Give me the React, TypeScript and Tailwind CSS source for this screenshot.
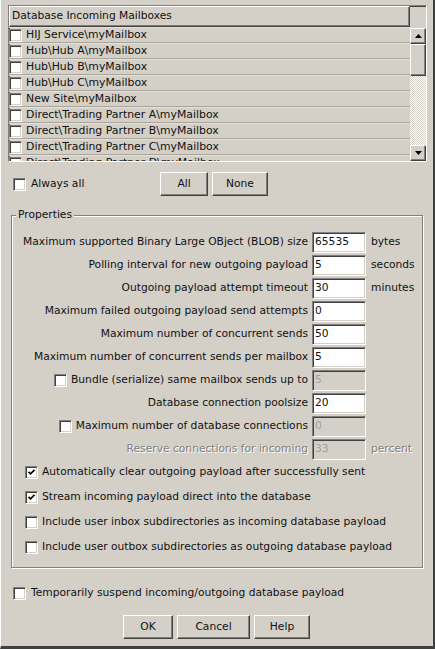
import React from "react";

const sunken =
  "border border-t-[#808080] border-l-[#808080] border-b-white border-r-white shadow-[inset_1px_1px_0_#404040,inset_-1px_-1px_0_#d4d0c8]";
const raised =
  "border border-t-white border-l-white border-b-[#404040] border-r-[#404040] shadow-[inset_-1px_-1px_0_#808080]";

function Check({ checked = false }: { checked?: boolean }) {
  return (
    <span
      className={`relative inline-block w-[13px] h-[13px] shrink-0 bg-white ${sunken}`}
    >
      {checked && (
        <svg
          className="absolute left-[1px] top-[1px]"
          width="9"
          height="9"
          viewBox="0 0 9 9"
        >
          <path
            d="M1.5 3.8 L3.5 5.8 L7.5 1.8"
            stroke="#000"
            strokeWidth="1.7"
            fill="none"
          />
        </svg>
      )}
    </span>
  );
}

function Btn({ w, children }: { w: string; children: React.ReactNode }) {
  return (
    <div
      className={`${w} h-[24px] bg-[#d4d0c8] flex items-center justify-center ${raised}`}
    >
      {children}
    </div>
  );
}

function Field({
  label,
  value,
  unit,
  check,
  disabled,
}: {
  label: string;
  value: string;
  unit?: string;
  check?: boolean;
  disabled?: boolean;
}) {
  return (
    <div className="flex items-center h-[23px]">
      <div
        className={`w-[300px] pr-[4px] flex justify-end items-center gap-[4px] whitespace-nowrap ${
          disabled ? "text-[#808080] [text-shadow:1px_1px_0_#fff]" : ""
        }`}
      >
        {check && <Check />}
        <span>{label}</span>
      </div>
      <div
        className={`w-[54px] h-[21px] flex items-center px-[2px] ${sunken} ${
          value && (check || disabled)
            ? "bg-[#d4d0c8] text-[#a0a0a0]"
            : "bg-white"
        }`}
      >
        {value}
      </div>
      {unit && (
        <span
          className={`ml-[5px] whitespace-nowrap ${
            disabled ? "text-[#808080] [text-shadow:1px_1px_0_#fff]" : ""
          }`}
        >
          {unit}
        </span>
      )}
    </div>
  );
}

const rows = [
  "HIJ Service\\myMailbox",
  "Hub\\Hub A\\myMailbox",
  "Hub\\Hub B\\myMailbox",
  "Hub\\Hub C\\myMailbox",
  "New Site\\myMailbox",
  "Direct\\Trading Partner A\\myMailbox",
  "Direct\\Trading Partner B\\myMailbox",
  "Direct\\Trading Partner C\\myMailbox",
  "Direct\\Trading Partner D\\myMailbox",
];

function Arrow({ up }: { up?: boolean }) {
  return (
    <div
      className={`w-[16px] h-[16px] bg-[#d4d0c8] flex items-center justify-center ${raised}`}
    >
      <svg width="7" height="4" viewBox="0 0 7 4">
        {up ? (
          <path d="M3.5 0 L7 4 L0 4 Z" fill="#000" />
        ) : (
          <path d="M0 0 L7 0 L3.5 4 Z" fill="#000" />
        )}
      </svg>
    </div>
  );
}

export default function App() {
  return (
    <div className="w-[435px] h-[649px] bg-[#d4d0c8] text-[#111] text-[10.7px] leading-none font-['DejaVu_Sans',sans-serif] border-l border-l-white border-r-2 border-r-[#404040] border-b-[3px] border-b-[#404040] flex flex-col pl-[7px] pt-[5px] overflow-hidden">
      {/* list */}
      <div className={`w-[419px] h-[157px] flex flex-col bg-[#d4d0c8] ${sunken}`}>
        <div className="flex h-[21px] shrink-0">
          <div className={`flex-1 flex items-center pl-[2px] ${raised}`}>
            Database Incoming Mailboxes
          </div>
          <div className="w-[16px]" />
        </div>
        <div className="flex flex-1 overflow-hidden">
          <div className="flex-1 flex flex-col overflow-hidden text-[10.9px]">
            {rows.map((r) => (
              <div
                key={r}
                className="h-[16px] shrink-0 flex items-center gap-[4px] border-b border-b-[#a7a49c] border-t border-t-[#e4e1da] whitespace-nowrap"
              >
                <Check />
                <span>{r}</span>
              </div>
            ))}
          </div>
          <div className="w-[16px] flex flex-col mt-[1px]">
            <Arrow up />
            <div className={`w-[16px] h-[32px] bg-[#d4d0c8] ${raised}`} />
            <div className="flex-1 bg-[repeating-conic-gradient(#ffffff_0_25%,#d4d0c8_0_50%)] bg-[length:2px_2px]" />
            <Arrow />
          </div>
        </div>
      </div>

      {/* always all */}
      <div className="flex items-center h-[24px] mt-[10px]">
        <div className="w-[152px] flex items-center pl-[5px] gap-[5px]">
          <Check />
          <span>Always all</span>
        </div>
        <Btn w="w-[48px]">All</Btn>
        <div className="w-[4px]" />
        <Btn w="w-[56px]">None</Btn>
      </div>

      {/* group */}
      <div className="relative ml-[3px] mt-[19px] w-[412px] h-[353px] border border-[#808080] shadow-[1px_1px_0_#fff,inset_1px_1px_0_#fff]">
        <span className="absolute -top-[6px] left-[4px] px-[2px] bg-[#d4d0c8]">
          Properties
        </span>
        <div className="flex flex-col pt-[15px]">
          <Field
            label="Maximum supported Binary Large OBject (BLOB) size"
            value="65535"
            unit="bytes"
          />
          <Field
            label="Polling interval for new outgoing payload"
            value="5"
            unit="seconds"
          />
          <Field
            label="Outgoing payload attempt timeout"
            value="30"
            unit="minutes"
          />
          <Field label="Maximum failed outgoing payload send attempts" value="0" />
          <Field label="Maximum number of concurrent sends" value="50" />
          <Field
            label="Maximum number of concurrent sends per mailbox"
            value="5"
          />
          <Field
            label="Bundle (serialize) same mailbox sends up to"
            value="5"
            check
          />
          <Field label="Database connection poolsize" value="20" />
          <Field
            label="Maximum number of database connections"
            value="0"
            check
          />
          <Field
            label="Reserve connections for incoming"
            value="33"
            unit="percent"
            disabled
          />
          <div className="flex flex-col pl-[13px] -mt-[1px]">
            {[
              ["Automatically clear outgoing payload after successfully sent", true],
              ["Stream incoming payload direct into the database", true],
              ["Include user inbox subdirectories as incoming database payload", false],
              ["Include user outbox subdirectories as outgoing database payload", false],
            ].map(([t, c]) => (
              <div
                key={t as string}
                className="h-[25px] flex items-center gap-[4px] whitespace-nowrap"
              >
                <Check checked={c as boolean} />
                <span>{t as string}</span>
              </div>
            ))}
          </div>
        </div>
      </div>

      {/* suspend */}
      <div className="flex items-center h-[24px] mt-[13px] pl-[5px] gap-[5px]">
        <Check />
        <span>Temporarily suspend incoming/outgoing database payload</span>
      </div>

      {/* buttons */}
      <div className="flex mt-[10px] pl-[115px] gap-[4px]">
        <Btn w="w-[50px]">OK</Btn>
        <Btn w="w-[73px]">Cancel</Btn>
        <Btn w="w-[56px]">Help</Btn>
      </div>
    </div>
  );
}
